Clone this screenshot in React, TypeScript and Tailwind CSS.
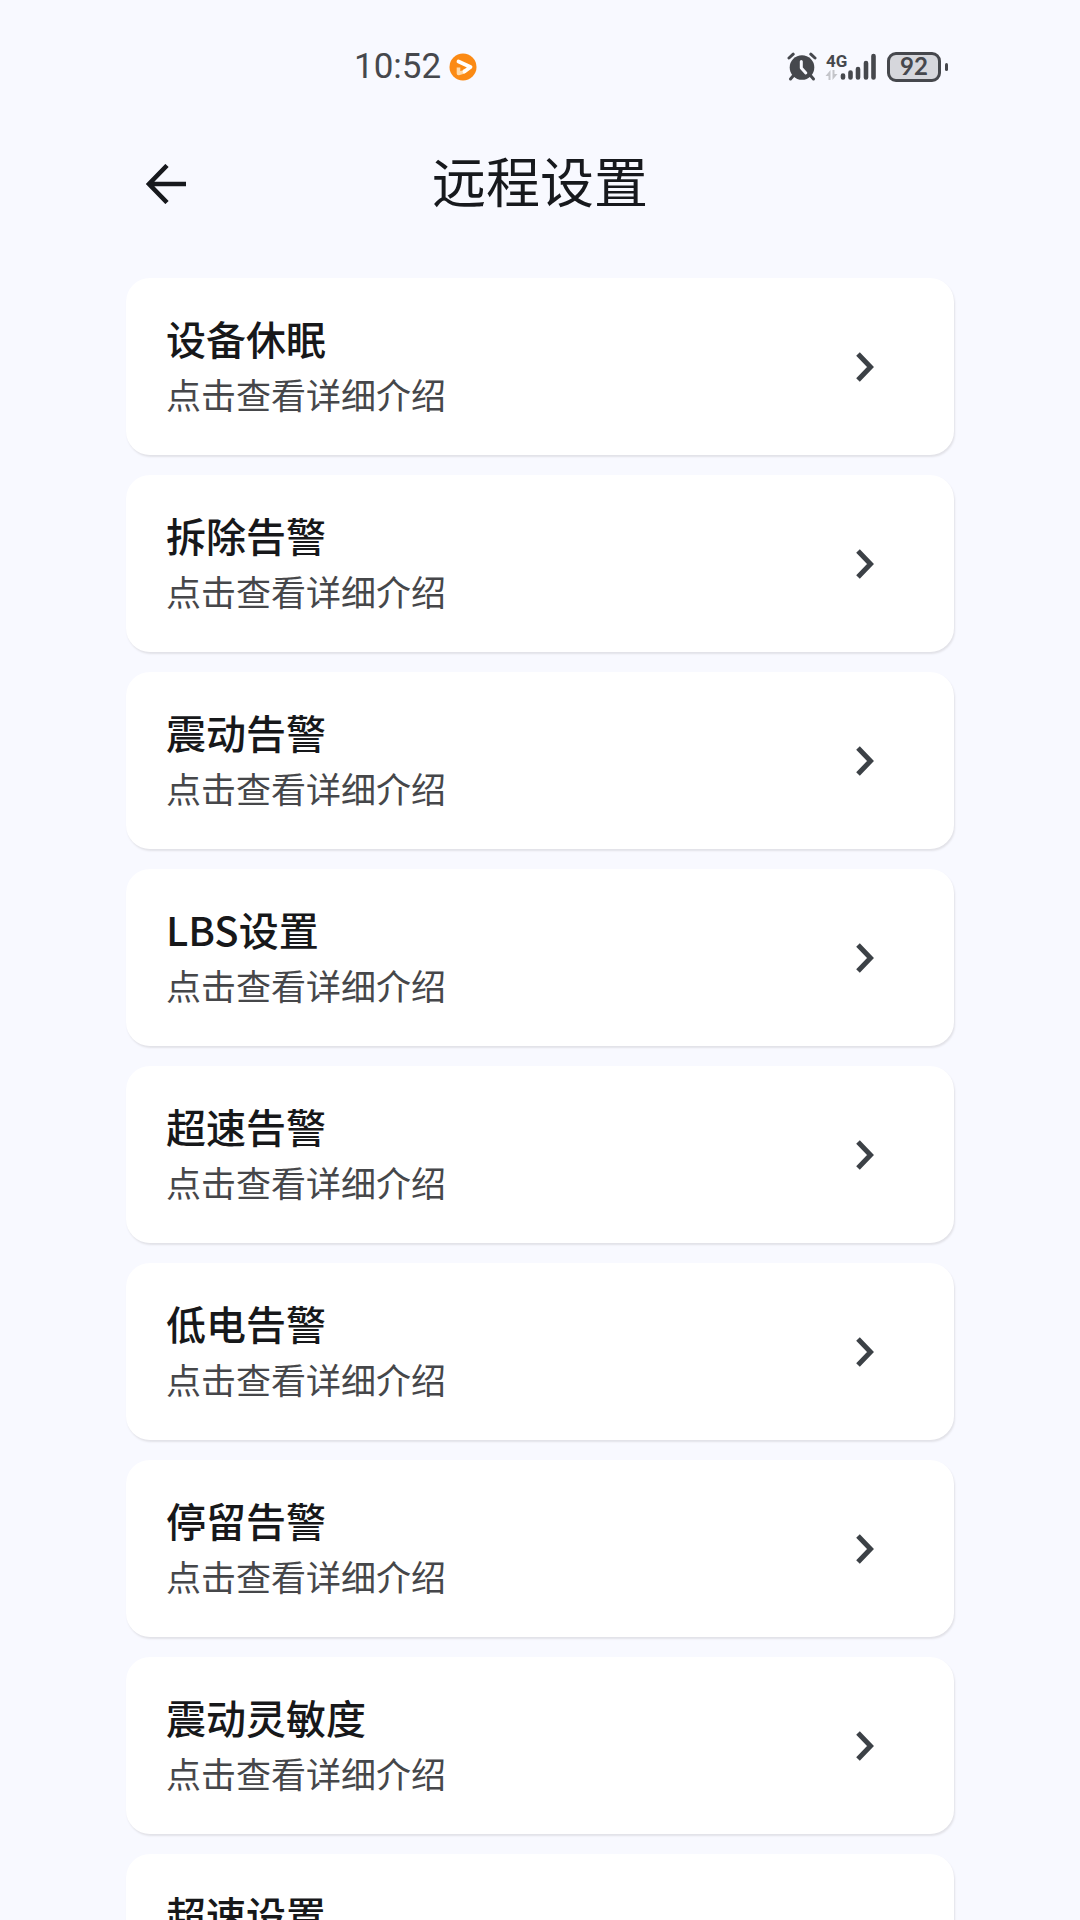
const items = [
  "设备休眠",
  "拆除告警",
  "震动告警",
  "LBS设置",
  "超速告警",
  "低电告警",
  "停留告警",
  "震动灵敏度",
  "超速设置",
];

function AlarmIcon() {
  return (
    <svg width="30" height="30" viewBox="0 0 30 30" fill="none" aria-hidden="true">
      <g stroke="#46484d" strokeWidth="3" strokeLinecap="round">
        <path d="M2 6 6.200 2.200M28 6 23.800 2.200" />
        <path d="M6.500 23.500 3.500 27M23.500 23.500 26.500 27" />
      </g>
      <circle cx="15" cy="15.500" r="12.300" fill="#46484d" />
      <path
        d="M14.300 9.500v6.500l4.500 5"
        stroke="#f8f9ff"
        strokeWidth="3"
        strokeLinecap="round"
        strokeLinejoin="round"
      />
    </svg>
  );
}

function SignalIcon() {
  return (
    <svg width="54" height="34" viewBox="0 0 54 34" aria-hidden="true">
      <text x="1" y="17" fontSize="17" fontWeight="700" fill="#46484d" fontFamily="Roboto, sans-serif">
        4G
      </text>
      <path d="M5.500 20v10H3.500V26H0.500zM7.500 20v10L12.500 24H9.500v-4z" fill="#c4c5ca" />
      <g stroke="#46484d" strokeWidth="4.600" strokeLinecap="round">
        <path d="M18 25.500v2M25.500 22.500v5M33 19v8.500M41 13v14.500M48.500 6v21.500" />
      </g>
    </svg>
  );
}

function StatusBar() {
  return (
    <div className="flex items-center justify-between pt-10 pr-33 pl-[354px] text-[#46484d]">
      <div className="flex items-center gap-2">
        <span className="font-['Roboto',sans-serif] text-[35px] leading-[54px]">10:52</span>
        <svg width="28" height="28" viewBox="0 0 28 28" fill="none" aria-hidden="true">
          <circle cx="14" cy="14" r="13.500" fill="#fb8a14" />
          <path d="M9.500 14.500v6l5-1.500 2-2" stroke="#ffd9a8" strokeWidth="3.600" strokeLinejoin="round" />
          <path
            d="M9.500 8.500 21.500 14l-6 4.500"
            stroke="#fff"
            strokeWidth="3.800"
            strokeLinecap="round"
            strokeLinejoin="round"
          />
        </svg>
      </div>
      <div className="flex items-center gap-2">
        <AlarmIcon />
        <SignalIcon />
        <div className="flex items-center gap-1">
          <div className="flex h-[30px] w-[54px] items-center justify-center rounded-[9px] border-[3px] border-[#46484d] bg-[#d6d7dc] pb-[2px] font-['Lato',sans-serif] text-2xl font-bold">
            92
          </div>
          <div className="h-2 w-[3px] rounded-full bg-[#46484d]" />
        </div>
      </div>
    </div>
  );
}

function Header() {
  return (
    <header className="grid grid-cols-[42px_1fr_42px] items-center px-36 pt-[46px] pb-[2px] text-[#17191d]">
      <button type="button" aria-label="返回" className="pt-2">
        <svg width="42" height="40" viewBox="0 0 42 40" fill="none" stroke="currentColor" strokeWidth="4.600" aria-hidden="true">
          <path d="M23 1.500 5 20l18 18.500M5 20h37" />
        </svg>
      </button>
      <h1 className="text-center text-[54px] leading-[80px]">远程设置</h1>
    </header>
  );
}

export default function App() {
  return (
    <div className="h-screen overflow-hidden bg-[#f8f9ff] font-['Noto_Sans_CJK_SC',sans-serif]" lang="zh-CN">
      <StatusBar />
      <Header />
      <main className="flex flex-col gap-5 px-[126px] pt-14">
        {items.map((item) => (
          <button
            key={item}
            type="button"
            className="flex w-full items-center justify-between rounded-3xl bg-white py-8 pr-20 pl-10 text-left shadow-[1px_2px_2px_#e2e2e8]"
          >
            <span className="flex flex-col pb-px">
              <span className="text-[40px] leading-14 font-medium text-[#17181a]">{item}</span>
              <span className="text-[35px] leading-14 text-[#46474a]">点击查看详细介绍</span>
            </span>
            <svg width="18" height="30" viewBox="0 0 18 30" fill="none" stroke="#3c4146" strokeWidth="5" aria-hidden="true">
              <path d="M2 2 14.500 15 2 28" />
            </svg>
          </button>
        ))}
      </main>
    </div>
  );
}
